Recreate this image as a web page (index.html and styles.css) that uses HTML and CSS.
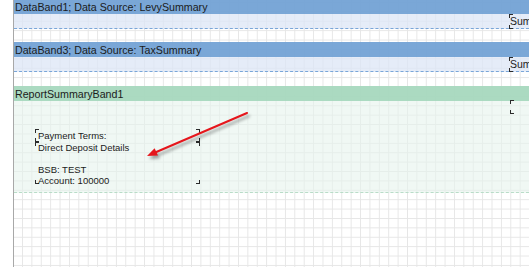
FILE: index.html
```html
<!DOCTYPE html>
<html lang="en">
<head>
    <meta charset="UTF-8">
    <meta name="viewport" content="width=device-width, initial-scale=1.0">
    <title>Report Designer - Bands</title>
    <link rel="stylesheet" href="styles.css">
</head>
<body>
    <div class="page">
        <section class="band band-data">
            <div class="band-title">DataBand1; Data Source: LevySummary</div>
            <div class="band-body">
                <div class="box box-sum">Sum</div>
            </div>
        </section>

        <section class="band band-data band-second">
            <div class="band-title">DataBand3; Data Source: TaxSummary</div>
            <div class="band-body">
                <div class="box box-sum">Sum</div>
            </div>
        </section>

        <section class="band band-summary">
            <div class="band-title">ReportSummaryBand1</div>
            <div class="band-body">
                <div class="terms">
                    <div class="box box-line">Payment Terms:</div>
                    <div class="box box-details">Direct Deposit Details<br><br>BSB: TEST<br>Account: 100000</div>
                </div>
                <div class="box box-empty"></div>
            </div>
        </section>
    </div>

    <!-- annotation arrow drawn over the designer -->
    <svg class="arrow" width="529" height="268" viewBox="0 0 529 268">
        <line x1="247" y1="113" x2="154" y2="153" stroke="#e5161c" stroke-width="2" stroke-linecap="round"/>
        <polygon points="147,156 158,155.6 154.6,148.2" fill="#e5161c"/>
    </svg>
</body>
</html>
```

FILE: styles.css
```css
* {
    box-sizing: border-box;
    margin: 0;
    padding: 0;
}

body {
    position: relative;
    width: 529px;
    height: 268px;
    overflow: hidden;
    background-color: #ffffff;
    font-family: 'Liberation Sans', Arial, sans-serif;
    color: #1b1b1b;
}

.page {
    margin-left: 13px;
    height: 268px;
    border-left: 1px solid #a8a8a8;
    background-color: #ffffff;
    background-image:
        linear-gradient(to right, #e6e6e6 1px, transparent 1px),
        linear-gradient(to bottom, #e6e6e6 1px, transparent 1px);
    background-size: 9.4px 9.4px;
    background-position: 8px 3px;
}

.band-title {
    height: 15px;
    margin-top: -1px;
    padding-left: 1px;
    font-size: 8pt;
    line-height: 16px;
    white-space: nowrap;
}

.band-data .band-title {
    background-color: rgba(112, 160, 212, 0.93);
}

.band-data .band-body {
    display: flex;
    height: 15px;
    padding-left: 495px;
    background-color: rgba(220, 230, 245, 0.75);
    border-bottom: 1px dashed #7aa6d8;
}

.band-data {
    margin-bottom: 13px;
}

.band-second .band-title {
    margin-top: 0;
}

.band-second {
    margin-bottom: 14px;
}

.band-summary .band-title {
    margin-top: 0;
    background-color: rgba(166, 216, 190, 0.95);
}

.band-summary .band-body {
    display: flex;
    align-items: flex-start;
    height: 92px;
    background-color: rgba(230, 244, 236, 0.6);
    border-bottom: 1px dashed #b9dcc8;
}

/* component with corner marks, like the designer draws them */
.box {
    flex-shrink: 0;
    background:
        linear-gradient(#2b2b2b, #2b2b2b) left top / 1px 4px no-repeat,
        linear-gradient(#2b2b2b, #2b2b2b) left top / 4px 1px no-repeat,
        linear-gradient(#2b2b2b, #2b2b2b) right top / 1px 4px no-repeat,
        linear-gradient(#2b2b2b, #2b2b2b) right top / 4px 1px no-repeat,
        linear-gradient(#2b2b2b, #2b2b2b) left bottom / 1px 4px no-repeat,
        linear-gradient(#2b2b2b, #2b2b2b) left bottom / 4px 1px no-repeat,
        linear-gradient(#2b2b2b, #2b2b2b) right bottom / 1px 4px no-repeat,
        linear-gradient(#2b2b2b, #2b2b2b) right bottom / 4px 1px no-repeat;
    font-size: 9.5px;
    white-space: nowrap;
}

.box-sum {
    width: 40px;
    height: 15px;
    padding-left: 1px;
    font-size: 10.5px;
    line-height: 14px;
}

.terms {
    flex-shrink: 0;
    width: 165px;
    margin-top: 28px;
    margin-left: 21px;
}

.box-line {
    height: 13px;
    padding-left: 3px;
    line-height: 14px;
}

.box-details {
    height: 42px;
    padding-left: 3px;
    line-height: 11px;
}

.box-empty {
    width: 40px;
    height: 14px;
    margin-left: 310px;
    margin-top: -1px;
}

.arrow {
    position: absolute;
    top: 0;
    left: 0;
    filter: drop-shadow(2px 3px 1.5px rgba(0, 0, 0, 0.35));
}
```
